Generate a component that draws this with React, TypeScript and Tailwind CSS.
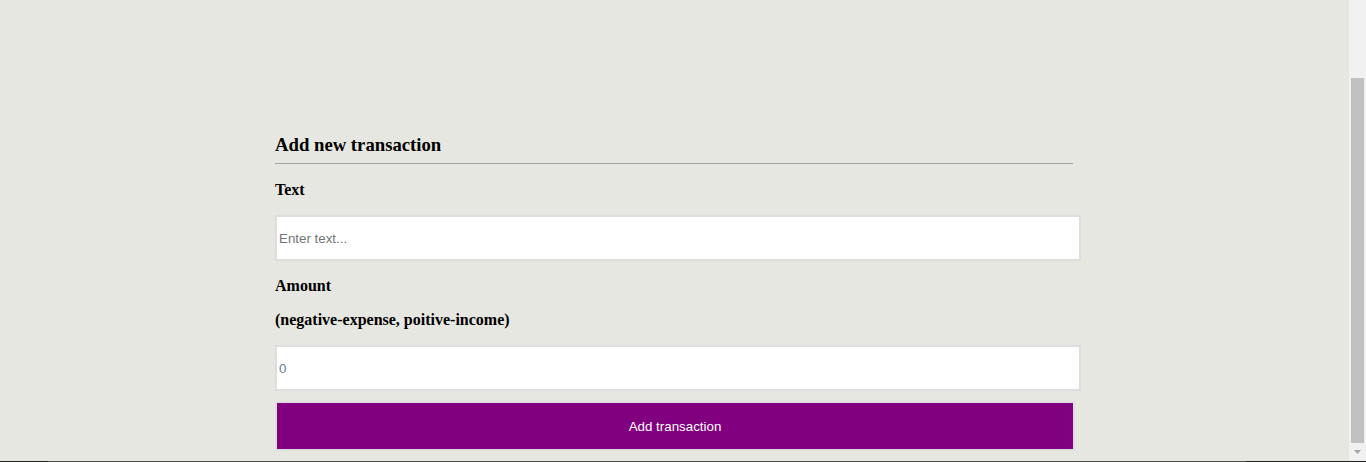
export default function App() {
  return (
    <div className="h-[462px] flex flex-col bg-[#e7e7e1]">
      <div className="h-[461px] flex">
        <div className="flex-1 min-w-0 overflow-hidden">
          <div className="ml-[275px] pt-[134px] flex flex-col items-start font-['Liberation_Serif',serif] text-black">
            <h3 className="w-[798px] text-[18.72px] font-bold leading-[22px] pb-[7px] border-b border-[#a3a3a3]">
              Add new transaction
            </h3>

            <label className="mt-[17px] text-base font-bold leading-[18px]">Text</label>
            <input
              type="text"
              placeholder="Enter text..."
              className="mt-4 w-[806px] h-[46px] bg-white border-2 border-[#dedede] px-[2px] font-['Liberation_Sans',Arial,sans-serif] text-[13.333px] placeholder:text-[#757575] outline-none"
            />

            <label className="mt-4 text-base font-bold leading-[18px]">Amount</label>
            <p className="mt-4 text-base font-bold leading-[18px]">(negative-expense, poitive-income)</p>
            <input
              type="number"
              placeholder="0"
              className="mt-4 w-[806px] h-[46px] bg-white border-2 border-[#dedede] px-[2px] font-['Liberation_Sans',Arial,sans-serif] text-[13.333px] placeholder:text-[#6a7d91] outline-none"
            />

            <button className="mt-[10px] w-[800px] h-[50px] pt-px bg-[#800080] border-2 border-[#dedede] text-white font-['Liberation_Sans',Arial,sans-serif] text-[13.333px]">
              Add transaction
            </button>
          </div>
        </div>

        {/* browser scrollbar, scrolled to the bottom */}
        <div className="w-[17px] flex flex-col bg-[#f1f1f1]">
          <div className="h-[17px]" />
          <div className="h-[61px]" />
          <div className="h-[365px] mx-[2px] bg-[#c1c1c1]" />
          <div className="flex-1 flex items-center justify-center">
            <svg width="7" height="4" viewBox="0 0 7 4">
              <path d="M0 0 H7 L3.5 4 Z" fill="#a3a3a3" />
            </svg>
          </div>
        </div>
      </div>
      <div className="h-px flex">
        <div className="w-[48px] bg-[#1e1e1e]" />
        <div className="flex-1 bg-[#4a4a4a]" />
        <div className="w-[120px] bg-[#1e1e1e]" />
      </div>
    </div>
  );
}
